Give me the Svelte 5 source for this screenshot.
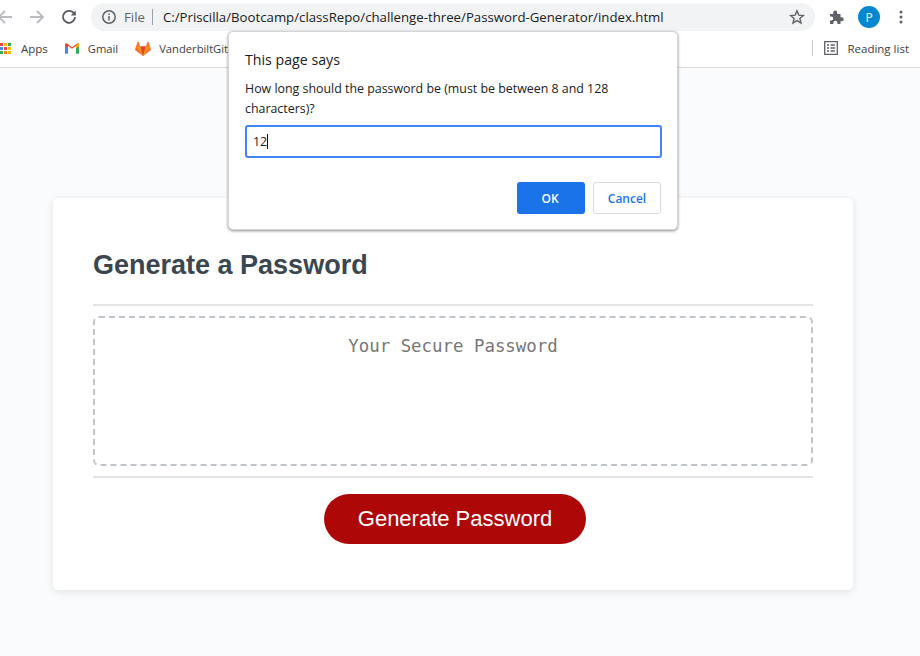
<script>
  const dots = ['#e8453c','#fbbc05','#34a853','#4285f4','#e8453c','#fbbc05','#34a853','#fa7b17','#fbbc05'];
</script>

<div class="window">
  <header class="chrome">
    <div class="toolbar">
      <svg class="nav" width="16" height="16" viewBox="0 0 16 16"><path d="M15 8H2M8 2L2 8l6 6" fill="none" stroke="#b9bbbe" stroke-width="1.8"/></svg>
      <svg class="nav fwd" width="16" height="16" viewBox="0 0 16 16"><path d="M1 8h13M8 2l6 6-6 6" fill="none" stroke="#b9bbbe" stroke-width="1.8"/></svg>
      <svg class="nav reload" width="16" height="16" viewBox="0 0 16 16"><path d="M13.3 5A6 6 0 1 0 14 8" fill="none" stroke="#55585c" stroke-width="1.8"/><path d="M14.8 1.5v5h-5z" fill="#55585c"/></svg>
      <div class="omnibox">
        <svg width="16" height="16" viewBox="0 0 16 16"><circle cx="8" cy="8" r="6.2" fill="none" stroke="#5f6368" stroke-width="1.5"/><path d="M8 7v4.4M8 4.5v1.4" stroke="#5f6368" stroke-width="1.5"/></svg>
        <span class="file">File</span>
        <span class="sep"></span>
        <span class="url">C:/Priscilla/Bootcamp/classRepo/challenge-three/Password-Generator/index.html</span>
        <svg class="star" width="16" height="16" viewBox="0 0 16 16"><path d="M8 1.8l1.8 4.3 4.6.4-3.5 3 1.1 4.5L8 11.6 4 14l1.1-4.5-3.5-3 4.6-.4z" fill="none" stroke="#5f6368" stroke-width="1.4"/></svg>
      </div>
      <svg class="puzzle" width="16" height="16" viewBox="0 0 16 16"><path d="M1 5h3.2V3.6a2 2 0 0 1 4 0V5H11.5v3.2h1.2a2 2 0 0 1 0 4h-1.2V15H8.4v-1.3a2 2 0 0 0-4 0V15H1v-3.4h1.2a2 2 0 0 0 0-4H1z" fill="#5f6368"/></svg>
      <span class="avatar">P</span>
      <svg class="kebab" width="4" height="14" viewBox="0 0 4 14"><circle cx="2" cy="2" r="1.5" fill="#5f6368"/><circle cx="2" cy="7" r="1.5" fill="#5f6368"/><circle cx="2" cy="12" r="1.5" fill="#5f6368"/></svg>
    </div>
    <div class="bookmarks">
      <span class="grid">{#each dots as c}<i style="background:{c}"></i>{/each}</span>
      <span class="bm apps">Apps</span>
      <svg class="gm" width="14" height="11" viewBox="0 0 16 12"><path d="M0 3v8a1 1 0 0 0 1 1h2.4V5.2z" fill="#4285f4"/><path d="M16 3v8a1 1 0 0 1-1 1h-2.4V5.2z" fill="#34a853"/><path d="M0 1.6C0 .4 1.3-.4 2.4.4L8 4.6 13.6.4C14.7-.4 16 .4 16 1.6V3l-3.4 2.6V2.8L8 6.3 3.4 2.8v2.8L0 3z" fill="#ea4335"/><path d="M12.6 2.8V5.6L16 3V1.6C16 .4 14.7-.4 13.6.4z" fill="#fbbc05"/></svg>
      <span class="bm gmail">Gmail</span>
      <svg class="gl" width="16" height="15" viewBox="0 0 16 15"><path d="M8 15L0 9l1-3.5L3 0l2.2 5.5h5.6L13 0l2 5.5L16 9z" fill="#fc6d26"/><path d="M8 15L5.2 5.5h5.6z" fill="#e24329"/><path d="M8 15L1 5.5h4.2zM8 15l7-9.5h-4.2z" fill="#fca326" opacity=".75"/></svg>
      <span class="bm vand">VanderbiltGit</span>
      <span class="spacer"></span>
      <span class="divider"></span>
      <svg class="rl" width="14" height="14" viewBox="0 0 14 14"><path d="M.7.7h12.6v12.6H.7zM3 4h2M6.5 4H11M3 7h2M6.5 7H11M3 10h2M6.5 10H11" fill="none" stroke="#5f6368" stroke-width="1.3"/></svg>
      <span class="bm reading">Reading list</span>
    </div>
  </header>

  <main class="page">
    <section class="card">
      <h2>Generate a Password</h2>
      <div class="body">
        <div class="output">Your Secure Password</div>
      </div>
      <div class="footer">
        <button class="generate">Generate Password</button>
      </div>
    </section>
  </main>

  <div class="dialog">
    <div class="title">This page says</div>
    <p>How long should the password be (must be between 8 and 128 characters)?</p>
    <div class="field">12<span class="caret"></span></div>
    <div class="actions">
      <button class="ok">OK</button>
      <button class="cancel">Cancel</button>
    </div>
  </div>
</div>

<style>
  :global(body) { margin: 0; }
  .window {
    position: relative;
    width: 920px;
    height: 656px;
    overflow: hidden;
    background: #f9fbfd;
    font-family: "Open Sans", "Noto Sans", sans-serif;
  }
  .chrome {
    background: #fff;
    border-bottom: 1px solid #dcdcdc;
    height: 67px;
    box-sizing: content-box;
  }
  .toolbar {
    display: flex;
    align-items: center;
    height: 34px;
  }
  .nav { flex: none; margin-left: -3px; }
  .fwd { margin-left: 16px; }
  .reload { margin-left: 16px; }
  .omnibox {
    display: flex;
    align-items: center;
    margin-left: 14px;
    width: 724px;
    height: 28px;
    border-radius: 14px;
    background: #f1f3f4;
    padding: 0 10px;
    box-sizing: border-box;
  }
  .file { margin-left: 7px; font-size: 13.2px; color: #5f6368; }
  .sep { width: 1px; height: 16px; background: #9aa0a6; margin: 0 10px 0 7px; }
  .url { font-size: 13.22px; color: #202124; white-space: nowrap; }
  .star { margin-left: auto; }
  .puzzle { margin-left: 14px; }
  .avatar {
    width: 22px;
    height: 22px;
    border-radius: 50%;
    background: #0288d1;
    color: #fff;
    font-size: 12px;
    display: flex;
    align-items: center;
    justify-content: center;
    margin-left: 13px;
  }
  .kebab { margin-left: 19px; }
  .bookmarks {
    display: flex;
    align-items: center;
    height: 28px;
    font-size: 11.5px;
    color: #3c4043;
  }
  .grid {
    display: grid;
    grid-template-columns: repeat(3, 3px);
    gap: 1px;
    width: 11px;
  }
  .grid i { width: 3px; height: 3px; display: block; }
  .bm { white-space: nowrap; }
  .apps { margin-left: 10px; }
  .gm { margin-left: 17px; }
  .gmail { margin-left: 9px; font-size: 11.2px; }
  .gl { margin-left: 17px; }
  .vand { margin-left: 8px; font-size: 11.2px; }
  .spacer { flex: 1; }
  .divider { width: 1px; height: 16px; background: #c6c8ca; }
  .rl { margin-left: 11px; }
  .reading { margin: 0 11px 0 9px; }

  .page {
    padding: 130px 67px 0 53px;
  }
  .card {
    background: #fff;
    border-radius: 5px;
    box-shadow: 0 2px 8px rgba(0, 0, 0, .1);
    width: 800px;
    height: 392px;
    padding: 0 40px;
    box-sizing: border-box;
    font-family: "Liberation Sans", Arial, sans-serif;
  }
  h2 {
    margin: 0;
    height: 108px;
    padding-top: 51px;
    box-sizing: border-box;
    font-size: 27px;
    line-height: 32px;
    font-weight: 700;
    color: #3a4750;
    border-bottom: 2px solid #e4e4e4;
  }
  .body { padding: 10px 0; }
  .output {
    height: 150px;
    box-sizing: border-box;
    border: 2px dashed #c0c4cb;
    border-radius: 6px;
    padding-top: 18px;
    text-align: center;
    font-family: "DejaVu Sans Mono", monospace;
    font-size: 17.4px;
    line-height: 20px;
    color: #777;
  }
  .footer {
    border-top: 2px solid #e4e4e4;
    padding-top: 16px;
    display: flex;
    justify-content: center;
  }
  .generate {
    width: 262px;
    height: 50px;
    margin-left: 4px;
    border: 0;
    border-radius: 25px;
    background: #ae0707;
    color: #fff;
    font-family: "Liberation Sans", Arial, sans-serif;
    font-size: 22px;
  }
  .dialog {
    position: absolute;
    left: 228px;
    top: 31px;
    width: 450px;
    height: 199px;
    box-sizing: border-box;
    padding: 17px 16px 0;
    background: #fff;
    border-radius: 5px;
    border: 1px solid #d4d4d4;
    box-shadow: 0 1px 3px rgba(0, 0, 0, .45);
    color: #202124;
  }
  .title { font-size: 14.2px; line-height: 22px; }
  p { margin: 8px 0 0; font-size: 12.4px; line-height: 20px; color: #202124; }
  .field {
    margin-top: 6px;
    width: 417px;
    height: 33px;
    box-sizing: border-box;
    border: 2px solid #4285f4;
    border-radius: 3px;
    padding-left: 6px;
    font-size: 12.4px;
    line-height: 29px;
    display: flex;
    align-items: center;
  }
  .caret { width: 1px; height: 15px; background: #111; }
  .actions {
    display: flex;
    justify-content: flex-end;
    gap: 8px;
    margin-top: 24px;
    width: 416px;
  }
  .actions button {
    width: 68px;
    height: 32px;
    border-radius: 3px;
    font-family: "Open Sans", sans-serif;
    font-size: 12px;
    font-weight: 600;
    padding: 0;
  }
  .actions .ok { background: #1a73e8; border: 0; color: #fff; padding-right: 2px; }
  .cancel { background: #fff; border: 1px solid #dadce0; color: #1a73e8; }
</style>
